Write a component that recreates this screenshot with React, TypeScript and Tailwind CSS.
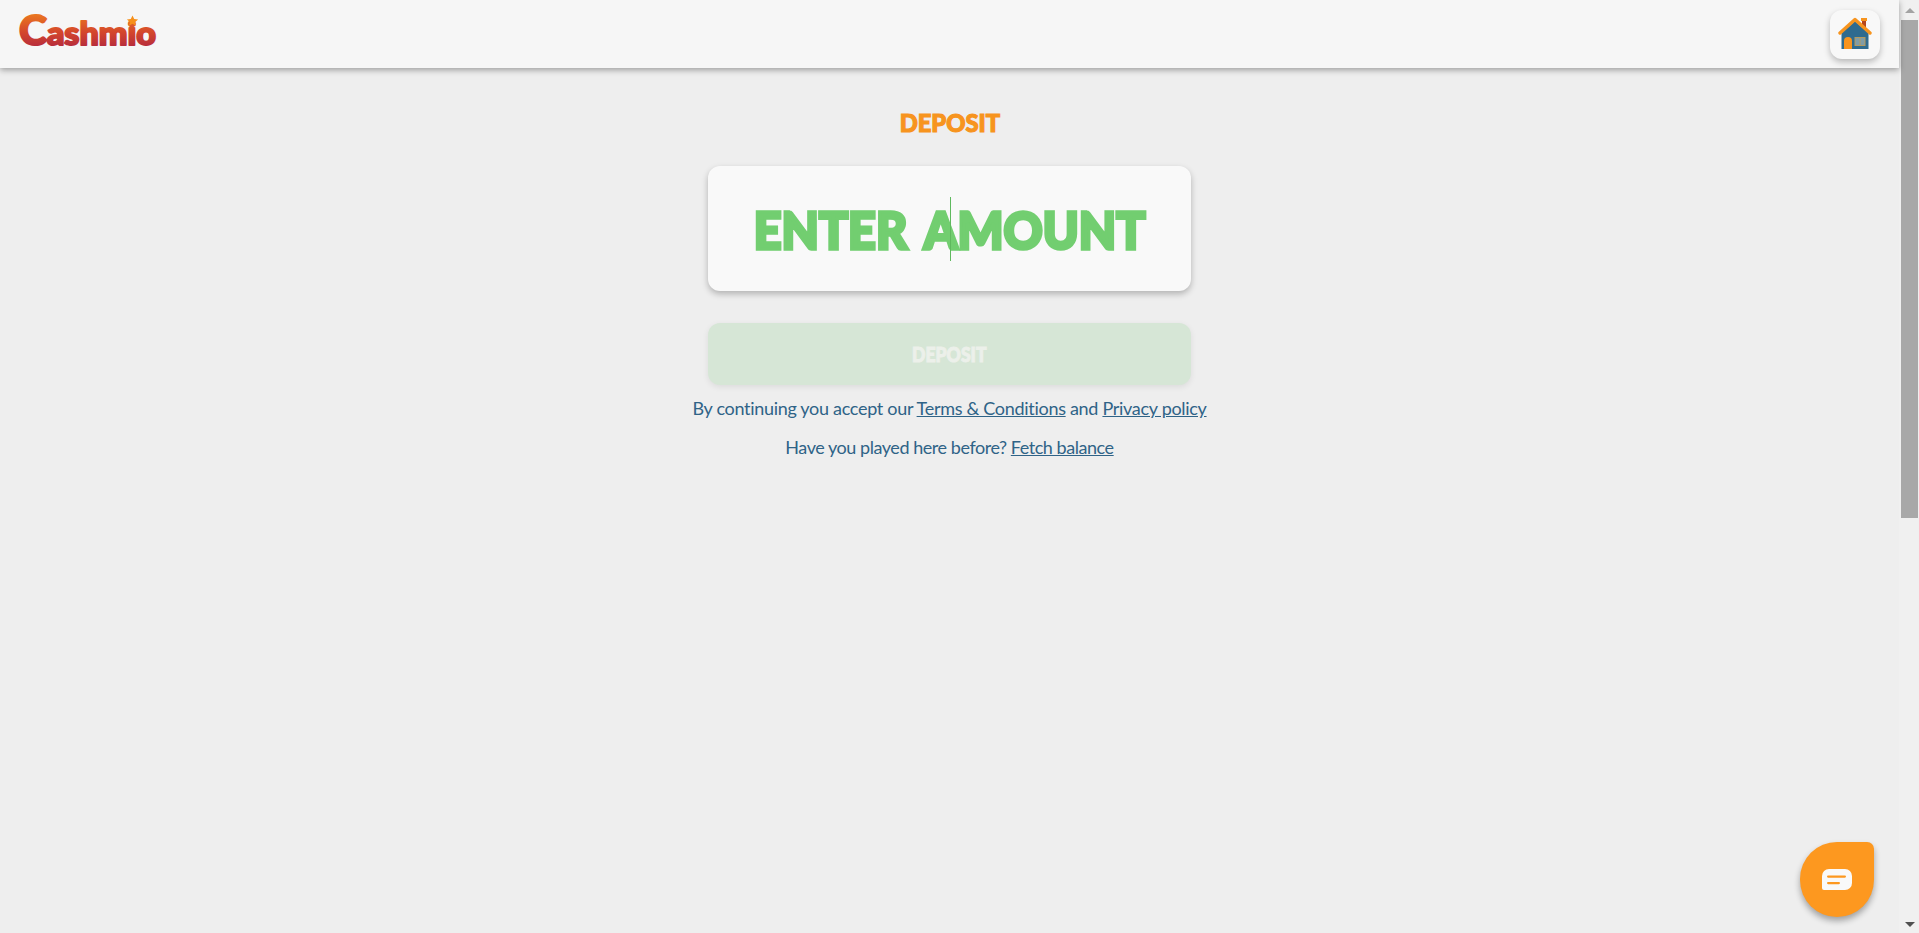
import React from "react";

const headFont = "font-['Lato',sans-serif] font-black";

function Logo() {
  return (
    <svg className="overflow-visible" width="146" height="48" viewBox="0 0 146 48">
      <defs>
        <linearGradient id="logoFill" x1="0" y1="0" x2="0" y2="1">
          <stop offset="0" stopColor="#f6901a" />
          <stop offset="0.55" stopColor="#d4472c" />
          <stop offset="1" stopColor="#a81f45" />
        </linearGradient>
      </defs>
      <text
        x="2"
        y="35"
        fontFamily="Lato, sans-serif"
        fontWeight="900"
        fontSize="33"
        fill="url(#logoFill)"
        stroke="url(#logoFill)"
        strokeWidth="2"
        strokeLinejoin="round"
        textLength="137"
        lengthAdjust="spacingAndGlyphs"
      >
        <tspan fontSize="41">C</tspan>ashmio
      </text>
      <path d="M115.5 5.5l1.7 3.5 3.9.4-2.9 2.6.8 3.8-3.5-2-3.5 2 .8-3.8-2.9-2.6 3.9-.4z" fill="#f6901a" />
    </svg>
  );
}

function House() {
  return (
    <svg width="34" height="34" viewBox="0 0 34 34">
      <rect x="24" y="3" width="4" height="9" fill="#b5451c" />
      <rect x="23" y="1" width="6" height="3" fill="#f7941e" />
      <path d="M3.5 16L17 4l13.5 12v16h-27z" fill="#2f6b8f" />
      <path d="M2 16L17 2.5 32 16" fill="none" stroke="#f7941e" strokeWidth="3.4" strokeLinecap="round" strokeLinejoin="round" />
      <path d="M6 32V24a4 4 0 0 1 8 0v8z" fill="#f7941e" />
      <rect x="17" y="20.5" width="10" height="8" fill="#7f9ca6" stroke="#b49a5e" strokeWidth="1" />
      <path d="M22 20.5v8" stroke="#b49a5e" strokeWidth="1" />
    </svg>
  );
}

function Scrollbar() {
  return (
    <div className="flex h-full w-[20px] shrink-0 flex-col bg-[#f0f0f0] pl-[2px] pr-px">
      <div className="flex h-[20px] items-center justify-center">
        <div className="h-0 w-0 border-x-[5px] border-b-[5px] border-x-transparent border-b-[#a3a3a3]" />
      </div>
      <div className="h-[498px] bg-[#a8a8a8]" />
      <div className="flex-1" />
      <div className="flex h-[17px] items-center justify-center">
        <div className="h-0 w-0 border-x-[5px] border-t-[5px] border-x-transparent border-t-[#505050]" />
      </div>
    </div>
  );
}

export default function App() {
  return (
    <div className="flex h-[933px] w-full overflow-hidden bg-[#eeeeee] font-['Lato',sans-serif] text-[#2f6387]">
      <div className="relative flex min-w-0 flex-1 flex-col">
        <header className="flex h-[68px] shrink-0 items-center justify-between bg-[#f6f6f6] pl-[17px] pr-[19px] shadow-[0_2px_6px_rgba(0,0,0,0.35)]">
          <Logo />
          <button className="flex h-[49px] w-[50px] items-center justify-center rounded-xl bg-[#f8f8f8] shadow-[0_3px_6px_rgba(0,0,0,0.25)]">
            <House />
          </button>
        </header>

        <main className="flex flex-col items-center pt-[39px]">
          <h1 className={`${headFont} scale-x-[0.95] text-[25px] leading-[30px] text-[#f7941e] [-webkit-text-stroke:1.2px_#f7941e]`}>
            DEPOSIT
          </h1>

          <div className="relative mt-[29px] flex h-[125px] w-[483px] items-center justify-center rounded-xl bg-[#f9f9f9] shadow-[0_3px_6px_rgba(0,0,0,0.25)]">
            <span className={`${headFont} inline-block scale-x-[0.93] whitespace-nowrap text-[52px] leading-none text-[#72ce70] [word-spacing:7px] [-webkit-text-stroke:3.5px_#72ce70]`}>
              ENTER AMOUNT
            </span>
            <div className="absolute left-[242px] top-[31px] h-[64px] w-px bg-[#5fb95e]" />
          </div>

          <button className={`mt-[32px] h-[62px] w-[483px] rounded-xl bg-[#d6e6d6] shadow-[0_2px_6px_rgba(0,0,0,0.08)] ${headFont} text-[20px] text-[#ecf0ea] [-webkit-text-stroke:1px_#ecf0ea]`}>
            <span className="inline-block scale-x-[0.88]">DEPOSIT</span>
          </button>

          <p className="mt-[11px] text-[18px] leading-[24px] tracking-[-0.3px]">
            By continuing you accept our <a className="underline">Terms &amp; Conditions</a> and{" "}
            <a className="underline">Privacy policy</a>
          </p>
          <p className="mt-[15px] text-[18px] leading-[24px] tracking-[-0.45px]">
            Have you played here before? <a className="underline">Fetch balance</a>
          </p>
        </main>

        <button className="absolute bottom-[16px] right-[25px] flex h-[75px] w-[74px] items-center justify-center rounded-[38px] rounded-tr-[7px] bg-[#fd981f] shadow-[0_4px_6px_rgba(0,0,0,0.32)]">
          <svg width="30" height="22" viewBox="0 0 30 22">
            <path d="M7 0h16a7 7 0 0 1 7 7v7a7 7 0 0 1-7 7H2a2 2 0 0 1-2-2V7a7 7 0 0 1 7-7z" fill="#f9f9f9" />
            <rect x="5" y="6.5" width="19" height="2.2" rx="1.1" fill="#fd981f" />
            <rect x="5" y="13" width="13" height="2.2" rx="1.1" fill="#fd981f" />
          </svg>
        </button>
      </div>
      <Scrollbar />
    </div>
  );
}
